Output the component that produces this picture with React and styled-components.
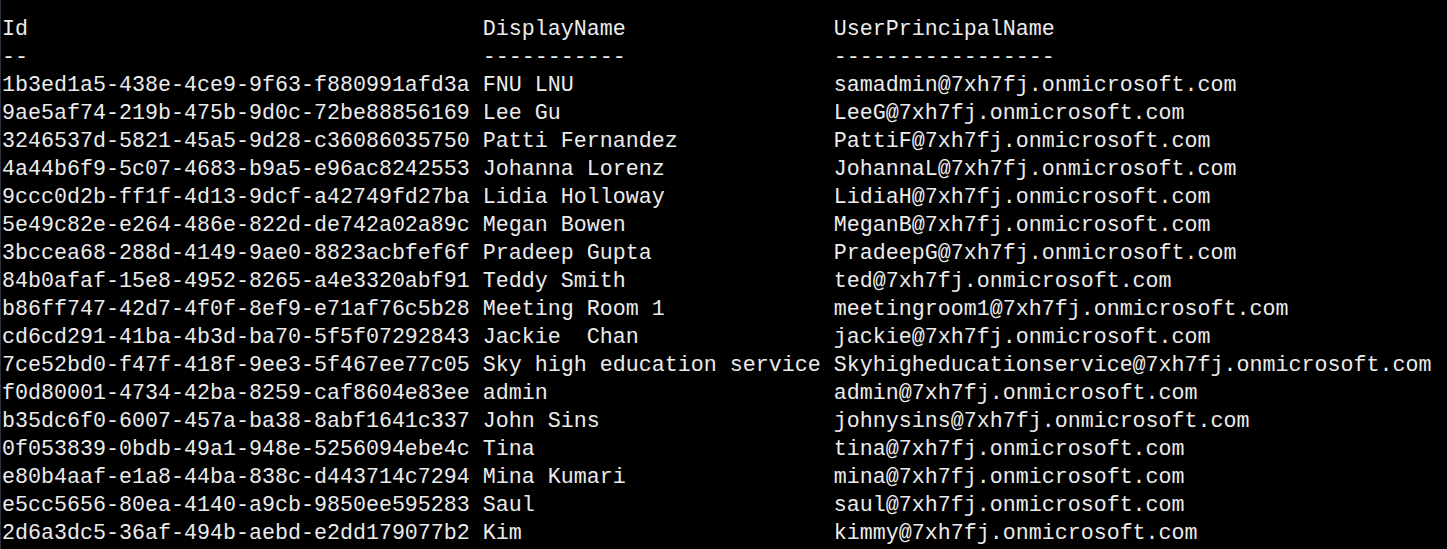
import styled, { createGlobalStyle } from "styled-components"

const GlobalStyle = createGlobalStyle`
	html, body {
		margin: 0;
		padding: 0;
		background: #000;
	}
`

const Console = styled.div`
	width: 1447px;
	height: 549px;
	box-sizing: border-box;
	overflow: hidden;
	background: #000;
	border-left: 1px solid #2e3040;
	padding: 16px 0 0 1px;
	font-family: "Liberation Mono", "DejaVu Sans Mono", monospace;
	font-size: 21.67px;
	line-height: 28px;
	color: #ececec;
`

const Row = styled.div`
	display: grid;
	grid-template-columns: 37ch 27ch auto;
	white-space: pre;
	height: 28px;
`

const Cell = styled.span`
	white-space: pre;
`

const users = [
	["1b3ed1a5-438e-4ce9-9f63-f880991afd3a", "FNU LNU", "samadmin@7xh7fj.onmicrosoft.com"],
	["9ae5af74-219b-475b-9d0c-72be88856169", "Lee Gu", "LeeG@7xh7fj.onmicrosoft.com"],
	["3246537d-5821-45a5-9d28-c36086035750", "Patti Fernandez", "PattiF@7xh7fj.onmicrosoft.com"],
	["4a44b6f9-5c07-4683-b9a5-e96ac8242553", "Johanna Lorenz", "JohannaL@7xh7fj.onmicrosoft.com"],
	["9ccc0d2b-ff1f-4d13-9dcf-a42749fd27ba", "Lidia Holloway", "LidiaH@7xh7fj.onmicrosoft.com"],
	["5e49c82e-e264-486e-822d-de742a02a89c", "Megan Bowen", "MeganB@7xh7fj.onmicrosoft.com"],
	["3bccea68-288d-4149-9ae0-8823acbfef6f", "Pradeep Gupta", "PradeepG@7xh7fj.onmicrosoft.com"],
	["84b0afaf-15e8-4952-8265-a4e3320abf91", "Teddy Smith", "ted@7xh7fj.onmicrosoft.com"],
	["b86ff747-42d7-4f0f-8ef9-e71af76c5b28", "Meeting Room 1", "meetingroom1@7xh7fj.onmicrosoft.com"],
	["cd6cd291-41ba-4b3d-ba70-5f5f07292843", "Jackie  Chan", "jackie@7xh7fj.onmicrosoft.com"],
	["7ce52bd0-f47f-418f-9ee3-5f467ee77c05", "Sky high education service", "Skyhigheducationservice@7xh7fj.onmicrosoft.com"],
	["f0d80001-4734-42ba-8259-caf8604e83ee", "admin", "admin@7xh7fj.onmicrosoft.com"],
	["b35dc6f0-6007-457a-ba38-8abf1641c337", "John Sins", "johnysins@7xh7fj.onmicrosoft.com"],
	["0f053839-0bdb-49a1-948e-5256094ebe4c", "Tina", "tina@7xh7fj.onmicrosoft.com"],
	["e80b4aaf-e1a8-44ba-838c-d443714c7294", "Mina Kumari", "mina@7xh7fj.onmicrosoft.com"],
	["e5cc5656-80ea-4140-a9cb-9850ee595283", "Saul", "saul@7xh7fj.onmicrosoft.com"],
	["2d6a3dc5-36af-494b-aebd-e2dd179077b2", "Kim", "kimmy@7xh7fj.onmicrosoft.com"],
]

const App = () => {
	return (
		<>
			<GlobalStyle />
			<Console>
				<Row>
					<Cell>Id</Cell>
					<Cell>DisplayName</Cell>
					<Cell>UserPrincipalName</Cell>
				</Row>
				<Row>
					<Cell>--</Cell>
					<Cell>-----------</Cell>
					<Cell>-----------------</Cell>
				</Row>
				{users.map(([id, name, upn]) => (
					<Row key={id}>
						<Cell>{id}</Cell>
						<Cell>{name}</Cell>
						<Cell>{upn}</Cell>
					</Row>
				))}
			</Console>
		</>
	)
}

export default App
